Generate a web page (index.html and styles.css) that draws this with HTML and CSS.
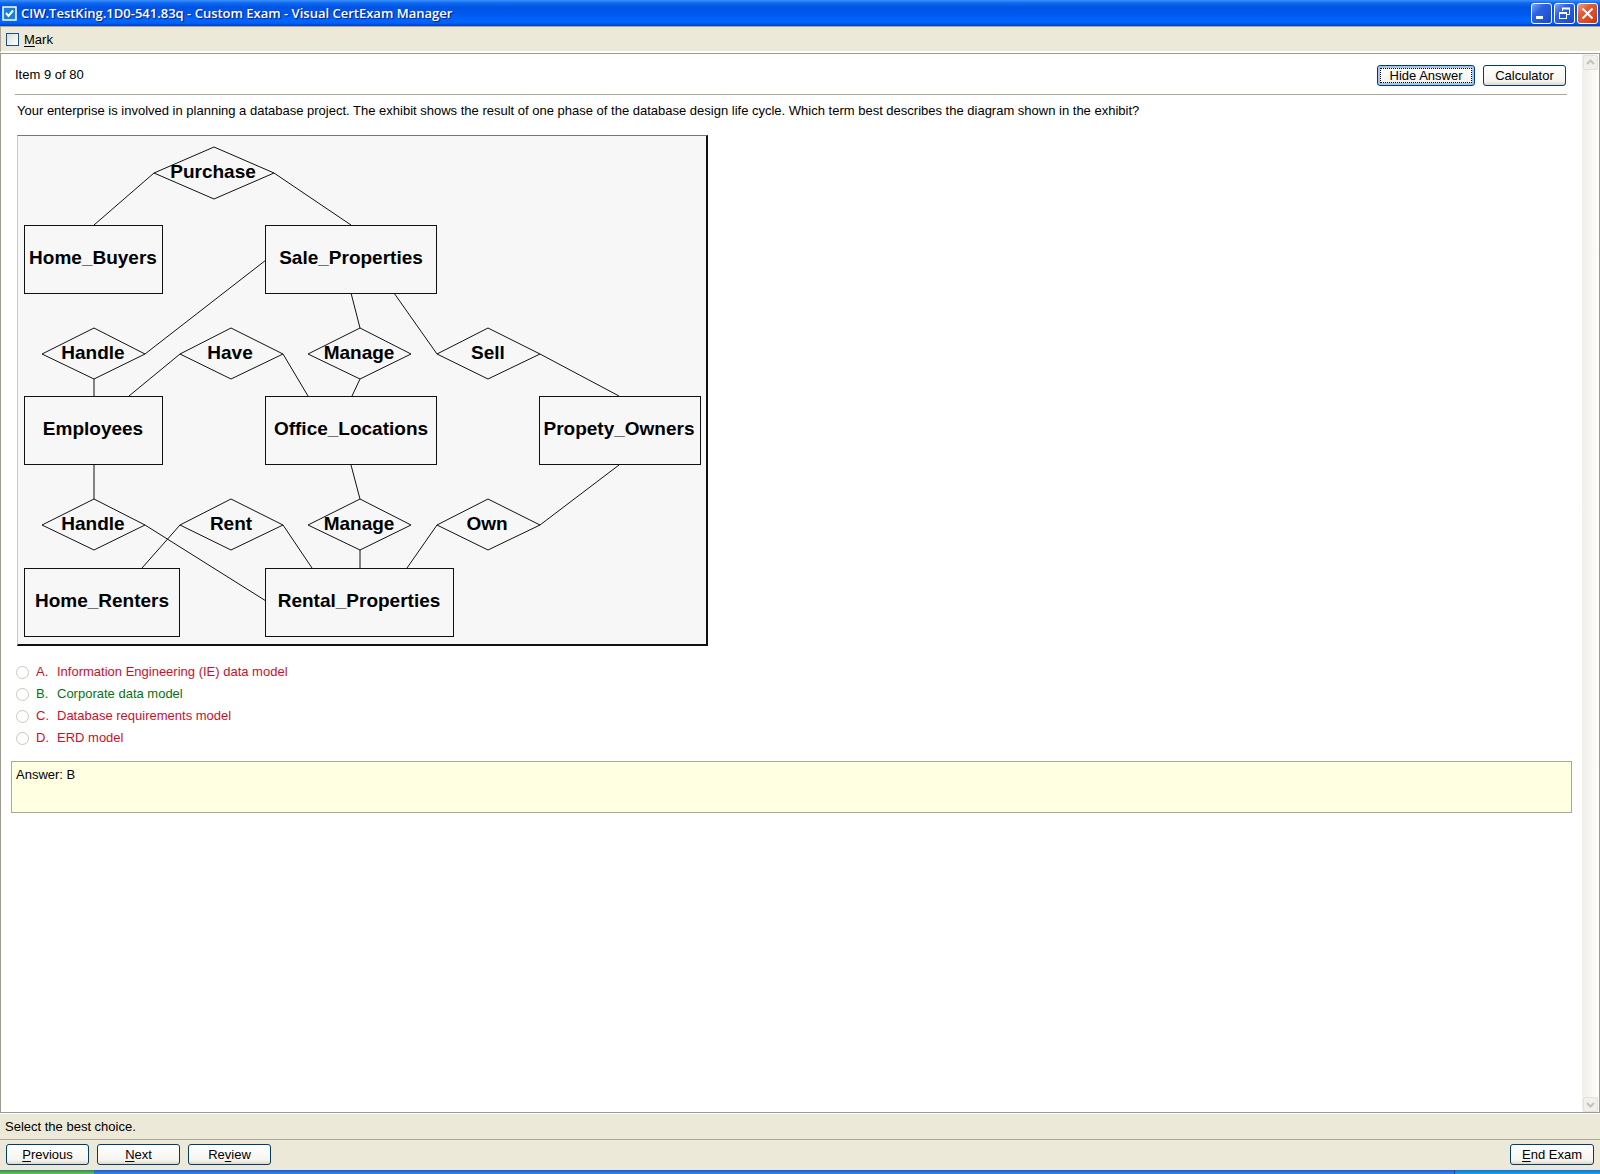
FILE: index.html
```html
<!DOCTYPE html>
<html lang="en">
<head>
    <meta charset="UTF-8">
    <meta name="viewport" content="width=device-width, initial-scale=1.0">
    <title>Visual CertExam Manager</title>
    <link rel="stylesheet" href="styles.css">
</head>
<body>
    <header class="titlebar">
        <svg class="app-icon" width="15" height="15" viewBox="0 0 15 15">
            <rect x="1" y="1" width="13" height="13" fill="#1c7fd6" stroke="#fff" stroke-width="1.5"/>
            <path d="M4 7l2.5 3L11 4.500" fill="none" stroke="#fff" stroke-width="2"/>
        </svg>
        <h1>CIW.TestKing.1D0-541.83q - Custom Exam - Visual CertExam Manager</h1>
        <div class="window-buttons">
            <button type="button" class="win" aria-label="Minimize">
                <svg width="19" height="19" viewBox="0 0 19 19"><rect x="4" y="12" width="7" height="3" fill="#fff"/></svg>
            </button>
            <button type="button" class="win" aria-label="Restore">
                <svg width="19" height="19" viewBox="0 0 19 19" fill="none" stroke="#fff">
                    <path d="M7.500 7V4.500h7v6H12" />
                    <path d="M7 4.500h8" stroke-width="2"/>
                    <rect x="4.500" y="8.500" width="7" height="6"/>
                    <path d="M4 9h8" stroke-width="2"/>
                </svg>
            </button>
            <button type="button" class="win close" aria-label="Close">
                <svg width="19" height="19" viewBox="0 0 19 19"><path d="M4.500 4.500l10 10M14.500 4.500l-10 10" stroke="#fff" stroke-width="2"/></svg>
            </button>
        </div>
    </header>

    <div class="toolbar">
        <input type="checkbox" id="mark">
        <label for="mark"><u>M</u>ark</label>
    </div>

    <div class="panel">
        <main class="content">
            <div class="item-head">
                <span>Item 9 of 80</span>
                <div class="item-actions">
                    <button type="button" class="btn focused">Hide Answer</button>
                    <button type="button" class="btn">Calculator</button>
                </div>
            </div>
            <p class="question">Your enterprise is involved in planning a database project. The exhibit shows the result of one phase of the database design life cycle. Which term best describes the diagram shown in the exhibit?</p>

            <figure class="exhibit">
                <svg width="688" height="508" viewBox="0 0 688 508">
                    <!-- connections -->
                    <g class="lines">
                        <path d="M136 37L76 89M256 37L333 89"/>
                        <path d="M248 124L127 218M76 243V260"/>
                        <path d="M162 218L111 260M265 218L290 260"/>
                        <path d="M333 157L342 192M342 243L334 260"/>
                        <path d="M376 157L419 218M522 218L601 260"/>
                        <path d="M76 329V363M127 389L248 465"/>
                        <path d="M162 389L124 432M265 389L294 432"/>
                        <path d="M333 329L342 363M342 414V432"/>
                        <path d="M419 389L389 432M601 329L522 389"/>
                    </g>
                    <!-- relationships -->
                    <g class="lines">
                        <path d="M136 37L196 11L256 37L196 63Z"/>
                        <path d="M24 218L76 192L127 218L76 243Z"/>
                        <path d="M162 218L213 192L265 218L213 243Z"/>
                        <path d="M290 218L342 192L393 218L342 243Z"/>
                        <path d="M419 218L470 192L522 218L470 243Z"/>
                        <path d="M24 389L76 363L127 389L76 414Z"/>
                        <path d="M162 389L213 363L265 389L213 414Z"/>
                        <path d="M290 389L342 363L393 389L342 414Z"/>
                        <path d="M419 389L470 363L522 389L470 414Z"/>
                    </g>
                    <!-- entities -->
                    <g class="boxes">
                        <rect x="6" y="89" width="138" height="68"/>
                        <rect x="247" y="89" width="171" height="68"/>
                        <rect x="6" y="260" width="138" height="68"/>
                        <rect x="247" y="260" width="171" height="68"/>
                        <rect x="521" y="260" width="161" height="68"/>
                        <rect x="6" y="432" width="155" height="68"/>
                        <rect x="247" y="432" width="188" height="68"/>
                    </g>
                    <g class="names">
                        <text x="195" y="42">Purchase</text>
                        <text x="75" y="128">Home_Buyers</text>
                        <text x="333" y="128">Sale_Properties</text>
                        <text x="75" y="223">Handle</text>
                        <text x="212" y="223">Have</text>
                        <text x="341" y="223">Manage</text>
                        <text x="470" y="223">Sell</text>
                        <text x="75" y="299">Employees</text>
                        <text x="333" y="299">Office_Locations</text>
                        <text x="601" y="299">Propety_Owners</text>
                        <text x="75" y="394">Handle</text>
                        <text x="213" y="394">Rent</text>
                        <text x="341" y="394">Manage</text>
                        <text x="469" y="394">Own</text>
                        <text x="84" y="471">Home_Renters</text>
                        <text x="341" y="471">Rental_Properties</text>
                    </g>
                </svg>
            </figure>

            <div class="choices">
                <div class="choice wrong">
                    <input type="radio" name="choice" id="choice-a" disabled>
                    <label for="choice-a"><span>A.</span>Information Engineering (IE) data model</label>
                </div>
                <div class="choice right">
                    <input type="radio" name="choice" id="choice-b" disabled>
                    <label for="choice-b"><span>B.</span>Corporate data model</label>
                </div>
                <div class="choice wrong">
                    <input type="radio" name="choice" id="choice-c" disabled>
                    <label for="choice-c"><span>C.</span>Database requirements model</label>
                </div>
                <div class="choice wrong">
                    <input type="radio" name="choice" id="choice-d" disabled>
                    <label for="choice-d"><span>D.</span>ERD model</label>
                </div>
            </div>

            <div class="answer">Answer: B</div>
        </main>
        <div class="scrollbar">
            <button type="button" class="scroll-btn" aria-label="Scroll up" disabled>
                <svg width="13" height="13" viewBox="0 0 13 13"><path d="M3 8l3.500-3.500L10 8"/></svg>
            </button>
            <button type="button" class="scroll-btn" aria-label="Scroll down" disabled>
                <svg width="13" height="13" viewBox="0 0 13 13"><path d="M3 5l3.500 3.500L10 5"/></svg>
            </button>
        </div>
    </div>

    <div class="status">Select the best choice.</div>

    <footer class="nav">
        <button type="button" class="btn"><u>P</u>revious</button>
        <button type="button" class="btn"><u>N</u>ext</button>
        <button type="button" class="btn">Re<u>v</u>iew</button>
        <button type="button" class="btn end"><u>E</u>nd Exam</button>
    </footer>

    <div class="taskbar">
        <div class="start"></div>
        <div class="tasks"></div>
        <div class="tray"></div>
    </div>
</body>
</html>
```
FILE: styles.css
```css
* { box-sizing: border-box; }
body { margin: 0; min-height: 100vh; display: flex; flex-direction: column; background: #ece9d8; color: #000; font: 13px/16px "Liberation Sans", Arial, sans-serif; }
button { font: inherit; color: inherit; padding: 0; }
u { text-underline-offset: 2px; }

/* title bar */
.titlebar { display: flex; align-items: center; height: 26px; padding: 0 2px 0 2px; background: linear-gradient(#3a92ff 0, #1268f0 3px, #0054e3 7px, #0058ee 14px, #0066ff 20px, #0062f6 23px, #003dc0 26px); }
.titlebar h1 { flex: 1; margin: 0 0 0 4px; color: #fff; font: 600 13px/20px "Open Sans", "Noto Sans", sans-serif; text-shadow: 1px 1px 1px #0a1883; white-space: nowrap; }
.window-buttons { display: flex; gap: 2px; }
.win { width: 21px; height: 21px; border: 1px solid #fff; border-radius: 3px; background: linear-gradient(135deg, #7fa4f5, #2f62df 35%, #2256d8 70%, #1a47bb); }
.win.close { background: linear-gradient(135deg, #f0a088, #e25a35 35%, #d84a22 70%, #b83412); }
.win svg { display: block; }

/* mark toolbar */
.toolbar { display: flex; align-items: center; gap: 5px; height: 27px; padding: 1px 5px 0; border-top: 1px solid #aca899; border-bottom: 2px solid #fff; border-left: 1px solid #aca899; }
.toolbar input { appearance: none; width: 13px; height: 13px; margin: 0; border: 1px solid #1d5281; background: linear-gradient(135deg, #dcdcd7, #fff); }

/* question panel */
.panel { flex: 1; display: flex; border: 1px solid #9d9a8f; background: #fff; }
.content { flex: 1; padding: 0 10px; }
.item-head { display: flex; align-items: center; justify-content: space-between; margin: 0 5px 0 4px; height: 41px; padding: 2px 1px 0 0; border-bottom: 1px solid #aca899; }
.item-actions { display: flex; gap: 8px; }
.question { margin: 8px 6px 16px; }
.exhibit { width: 691px; margin: 0 6px; border: solid; border-width: 1px 2px 2px 1px; border-color: #777 #111 #111 #ccc; background: #f7f7f7; }
.exhibit svg { display: block; }
.lines { fill: none; stroke: #111; stroke-width: 1; }
.boxes { fill: #f7f7f7; stroke: #111; stroke-width: 1; shape-rendering: crispEdges; }
.names { font: bold 19px "Liberation Sans", Arial, sans-serif; text-anchor: middle; fill: #000; }

/* choices */
.choices { margin: 15px 5px 12px; }
.choice { display: flex; align-items: center; gap: 7px; height: 22px; }
.choice input { appearance: none; width: 13px; height: 13px; margin: 0; border: 1px solid #cac8bb; border-radius: 50%; background: #fff; }
.choice label { display: flex; }
.choice span { width: 21px; }
.wrong { color: #c8102e; }
.right { color: #087018; }
.answer { height: 52px; padding: 5px 4px; border: 1px solid #aca899; background: #ffffe1; }

/* buttons */
.btn { min-width: 83px; height: 21px; padding: 0 11px; border: 1px solid #003c74; border-radius: 3px; background: linear-gradient(#fff, #f5f4ee 80%, #dcd8cb); line-height: 17px; }
.btn.focused { min-width: 98px; box-shadow: inset 0 0 0 2px #a9c4ef; outline: 1px dotted #000; outline-offset: -4px; }

/* scrollbar */
.scrollbar { display: flex; flex-direction: column; justify-content: space-between; width: 17px; padding: 1px 1px 0; background: linear-gradient(90deg, #f0efe9, #fefefb); }
.scroll-btn { width: 15px; height: 15px; border: 1px solid #e4e2d6; border-radius: 2px; background: #f1f0ea; }
.scroll-btn svg { display: block; fill: none; stroke: #c4c3b8; stroke-width: 2; }

/* bottom bars */
.status { height: 26px; padding: 5px; border-top: 1px solid #fff; }
.nav { display: flex; gap: 8px; padding: 4px 6px; border-top: 1px solid #aca899; }
.nav .end { margin-left: auto; }
.taskbar { display: flex; height: 5px; border-top: 1px solid #dfe9f8; }
.start { width: 94px; background: linear-gradient(#3a8a3a, #6abf69); }
.tasks { flex: 1; background: linear-gradient(#1d5cc8, #3a84ec); }
.tray { width: 146px; border-left: 1px solid #0b4a9e; background: linear-gradient(#0f74c8, #1ba4f0); }
```
